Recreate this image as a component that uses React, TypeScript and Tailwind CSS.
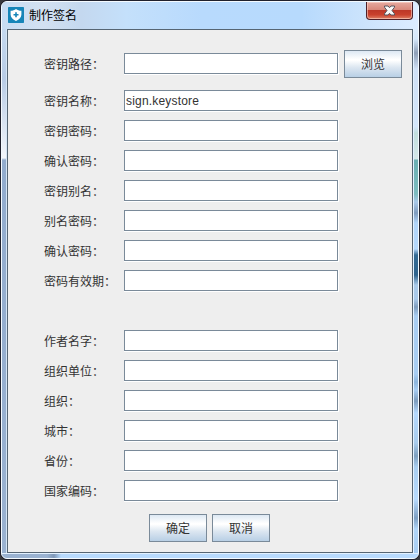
import { useState } from "react";

type Field = {
    id: string;
    label: string;
    value?: string;
};

const KEY_FIELDS: Field[] = [
    { id: "name", label: "密钥名称：", value: "sign.keystore" },
    { id: "password", label: "密钥密码：" },
    { id: "passwordConfirm", label: "确认密码：" },
    { id: "alias", label: "密钥别名：" },
    { id: "aliasPassword", label: "别名密码：" },
    { id: "aliasConfirm", label: "确认密码：" },
    { id: "validity", label: "密码有效期：" },
];

const OWNER_FIELDS: Field[] = [
    { id: "author", label: "作者名字：" },
    { id: "unit", label: "组织单位：" },
    { id: "org", label: "组织：" },
    { id: "city", label: "城市：" },
    { id: "province", label: "省份：" },
    { id: "country", label: "国家编码：" },
];

const FieldRow: React.FC<{ field: Field }> = ({ field }) => {
    const [value, setValue] = useState(field.value ?? "");
    return (
        <div className="flex h-[22px]">
            <label htmlFor={field.id} className="w-20 shrink-0 whitespace-nowrap pt-px leading-[22px]">{field.label}</label>
            <div className="h-[22px] w-[215px] shrink-0 border-r border-b border-white">
                <input
                    id={field.id}
                    value={value}
                    onChange={(e) => setValue(e.target.value)}
                    className="block h-[21px] w-[214px] border border-[#7a8a99] bg-white px-[1px] text-[12px] tracking-[0.18px] text-[#333] outline-none"
                />
            </div>
        </div>
    );
};

const MetalButton: React.FC<{ text: string }> = ({ text }) => (
    <button className="h-7 w-[58px] shrink-0 border border-[#7a8a99] bg-[linear-gradient(#dde8f3_0%,#ffffff_32%,#ffffff_36%,#dde7f1_62%,#b8cfe5_100%)] pt-px text-[12px] leading-[26px] text-[#333]">
        {text}
    </button>
);

const ShieldIcon: React.FC = () => (
    <svg width="16" height="16" viewBox="0 0 16 16">
        <rect width="16" height="16" rx=".7" fill="#1685b8" />
        <path d="M8 1.900C9.500 3 11.300 3.600 13.400 3.700V7.500C13.400 10.500 11.300 12.600 8 13.900 4.700 12.600 2.600 10.500 2.600 7.500V3.700C4.700 3.600 6.500 3 8 1.900z" fill="#fff" />
        <path d="M8 5.200v5M5.500 7.700h5" stroke="#1685b8" strokeWidth="1.600" />
    </svg>
);

const CloseButton: React.FC = () => (
    <button className="mr-[5px] flex h-[18px] w-[47px] items-center justify-center rounded-b-[4px] border border-t-0 border-[#4e2029] bg-[linear-gradient(#e6aaa0_0%,#d9887b_45%,#bd3828_50%,#c9412d_75%,#df8065_100%)] shadow-[inset_0_0_0_1px_rgba(255,220,210,0.55)]">
        <svg width="13" height="11" viewBox="0 0 13 11">
            <path d="M1.500 1h3.500l1.500 1.700 1.500-1.700h3.500v1.200L9 5.500l2.500 3.300V10H8L6.500 8.300 5 10H1.500V8.800L4 5.500 1.500 2.200z" fill="#f8f8f8" stroke="#57545e" strokeWidth="1" />
        </svg>
    </button>
);

const App: React.FC = () => {
    return (
        <div className="h-[560px] w-[420px] overflow-hidden bg-[#39393d] font-['Liberation_Sans','Noto_Sans_CJK_SC',sans-serif] text-[12px] text-[#333]">
            <div className="h-full w-full rounded-[7px] border border-[#20212d]">
                <div className="flex h-full flex-col overflow-hidden rounded-[6px] border border-[#f4faff] bg-[#b8dafb]">
                    <div className="flex h-[27px] shrink-0 items-start justify-between bg-[linear-gradient(90deg,#c7dcf3_0%,#d3e1f1_10%,#c4d8ef_19%,#c4e0fb_30%,#b8dafd_48%,#b7dafd_72%,#cde4fc_88%,#dcecff_100%)]">
                        <div className="flex items-start pl-[6px] pt-[5px]">
                            <ShieldIcon />
                            <span className="ml-[5px] pt-px text-[12px] leading-4 text-black">制作签名</span>
                        </div>
                        <CloseButton />
                    </div>
                    <div className="flex min-h-0 flex-1">
                        <div className="w-[5px] shrink-0 border-r border-[#d5e5f5] bg-[linear-gradient(#c5d9f0_0px,#b8cce6_50px,#f3f6fb_129px,#92acce_131px,#9ab2d1_100%)]" />
                        <div className="w-[406px] shrink-0 border border-[#566573] bg-[#eee] pl-9">
                            <div className="mt-[23px] flex h-[22px] items-center">
                                <FieldRow field={{ id: "path", label: "密钥路径：" }} />
                                <div className="ml-[5px]">
                                    <MetalButton text="浏览" />
                                </div>
                            </div>
                            <div className="mt-[15px] flex flex-col gap-2">
                                {KEY_FIELDS.map((field) => <FieldRow key={field.id} field={field} />)}
                            </div>
                            <div className="mt-[38px] flex flex-col gap-2">
                                {OWNER_FIELDS.map((field) => <FieldRow key={field.id} field={field} />)}
                            </div>
                            <div className="ml-[105px] mt-3 flex gap-[5px]">
                                <MetalButton text="确定" />
                                <MetalButton text="取消" />
                            </div>
                        </div>
                        <div className="flex-1 border-l border-[#e3f1ff] bg-[linear-gradient(#dcebfb_0px,#d5e7fa_10px,#8fa0b8_24px,#cfe0f5_40px,#d3e6fb_98px,#c1dedd_104px,#d5e7e9_130px,#6aafb3_131px,#7dbcc0_165px,#a9c8e8_173px,#7f9cbe_184px,#b0d4f8_194px,#b5d8fc_220px,#356b94_226px,#2f648e_246px,#a9c9e8_256px,#a9c9ea_270px,#7f9dbe_278px,#a8cdf2_287px,#a8cdf2_345px,#8db5dc_353px,#a8cdf2_361px,#7d9cbd_372px,#b5d8fc_384px,#a8cbec_414px,#7d9fbf_427px,#a8cdf0_438px,#b8dafd_470px,#7d9fc3_489px,#b0d5f8_500px,#a8cdf2_100%)]" />
                    </div>
                    <div className="h-[5px] shrink-0 border-t border-[#e3f1ff] bg-[linear-gradient(90deg,#9ab2d1_0px,#9ab2d1_45px,#7f98b8_52px,#b8dafd_59px,#b8dafd_100%)]" />
                </div>
            </div>
        </div>
    );
};

export default App;
